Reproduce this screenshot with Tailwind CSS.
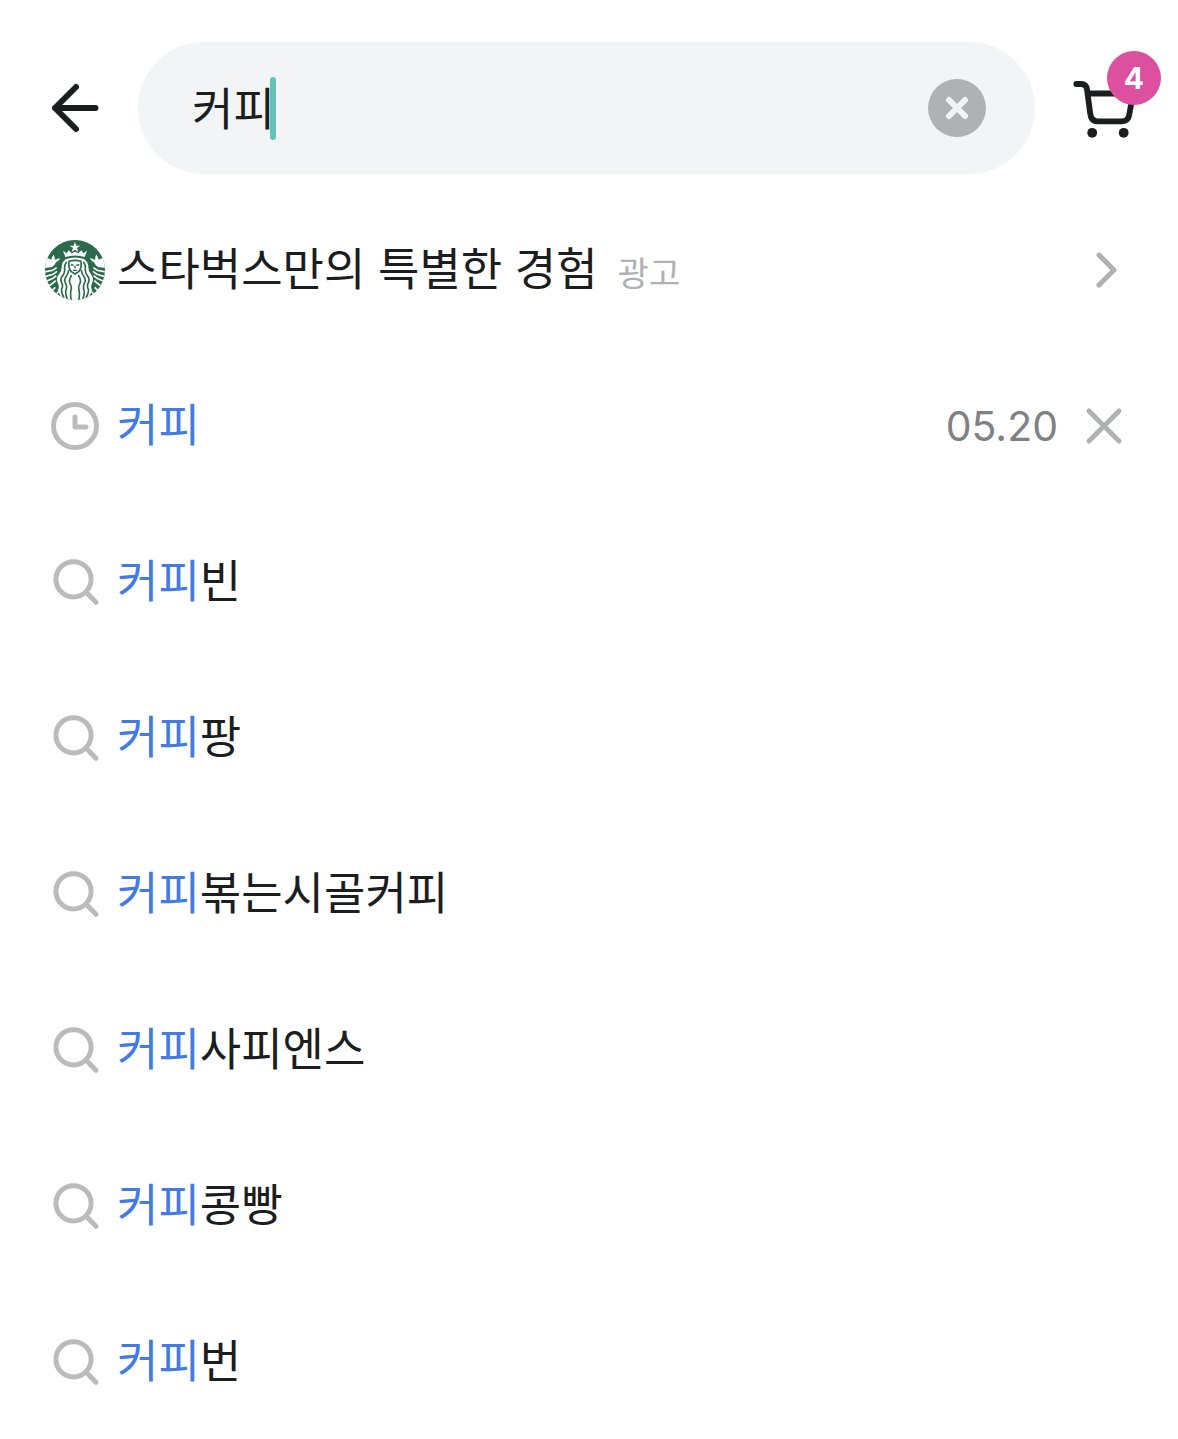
<!DOCTYPE html>
<html lang="ko">

<head>
    <meta charset="UTF-8">
    <meta name="viewport" content="width=device-width, initial-scale=1.0">
    <title>커피 - 검색</title>
    <script src="https://cdn.jsdelivr.net/npm/@tailwindcss/browser@4"></script>
</head>

<body class="bg-white text-[#1c1d1f] text-[45px] leading-[60px] font-['Noto_Sans_CJK_KR',sans-serif]">

    <!-- Shared icons -->
    <svg class="hidden" aria-hidden="true">
        <symbol id="icon-search" viewBox="0 0 60 60">
            <g fill="none" stroke="#bbbbbb" stroke-width="5" stroke-linecap="round">
                <circle cx="28.5" cy="27.3" r="17.6" />
                <path d="M41.5 40.5L51 50.3" />
            </g>
        </symbol>
    </svg>

    <header class="flex items-center gap-[33px] pt-[42px] pl-[45px] pr-[38px]">
        <button type="button" aria-label="뒤로" class="shrink-0">
            <svg class="size-[60px]" viewBox="0 0 60 60" fill="none" stroke="#1c1d1f" stroke-width="6" stroke-linecap="round" stroke-linejoin="round">
                <path d="M50.5 30H10M31 9L10 30L31 51" />
            </svg>
        </button>

        <form role="search" class="flex flex-1 items-center h-[132px] min-w-0 rounded-full bg-[#f2f4f6] pl-[54px] pr-[49px]">
            <input type="text" value="커피" aria-label="검색어" class="field-sizing-content min-w-0 pb-0.5 outline-none">
            <span class="-ml-[5px] h-[63px] w-1.5 shrink-0 rounded-full bg-[#62c3b5]"></span>
            <button type="reset" aria-label="지우기" class="ml-auto shrink-0">
                <svg class="size-[58px]" viewBox="0 0 58 58">
                    <circle cx="29" cy="29" r="29" fill="#b0b1b3" />
                    <path d="M21 21L37 37M37 21L21 37" stroke="#f2f4f6" stroke-width="6" stroke-linecap="round" />
                </svg>
            </button>
        </form>

        <a href="#" aria-label="장바구니" class="relative shrink-0">
            <svg class="size-[72px]" viewBox="0 0 72 72" fill="none" stroke="#1c1d1f" stroke-width="5.8" stroke-linecap="round" stroke-linejoin="round">
                <path d="M8.3 12H13Q18.3 12 19 17.5L22.3 42Q23.3 49.3 29.5 49.3H54Q60 49.3 61.2 43L65 21.500H20" />
                <g fill="#1c1d1f" stroke="none">
                    <circle cx="24.2" cy="60.8" r="4.9" />
                    <circle cx="55.7" cy="60.8" r="4.9" />
                </g>
            </svg>
            <span class="absolute -top-[21px] -right-[21px] flex size-[54px] items-center justify-center rounded-full bg-[#dd4f9f] font-['Inter',sans-serif] text-[30px] font-bold text-white">4</span>
        </a>
    </header>

    <main>
        <ul class="flex flex-col gap-[60px] pt-12 pb-7 pl-[45px] pr-11">
            <li>
                <a href="#" class="flex h-24 items-center">
                    <svg class="size-[60px] shrink-0" viewBox="30 30 180 180">
                        <clipPath id="logo-clip"><circle cx="120" cy="120" r="90" /></clipPath>
                        <g clip-path="url(#logo-clip)">
                            <path fill="#2b6b4c" d="M30 30h180v180H30z" />
                            <g fill="#fff">
                                <!-- star and crown -->
                                <path d="M120 36l4 11h12l-10 7 4 12-10-7-10 7 4-12-10-7h12z" />
                                <path d="M84 62l11 8 6-9 9 9 10-5 10 5 9-9 6 9 11-8-7 19q-29-9-58 0z" />
                                <!-- raised tails -->
                                <path d="M32 84q10 0 17 5 1-9 7-15 5 8 3 16 8-5 17-5-5 8-13 12-4 10-12 14l-21 3-4-8q10-9 6-22z" />
                                <path d="M208 84q-10 0-17 5-1-9-7-15-5 8-3 16-8-5-17-5 5 8 13 12 4 10 12 14l21 3 4-8q-10-9-6-22z" />
                                <!-- hair and body -->
                                <path d="M93 87q27-9 54 0 13 9 13 25 0 13 8 21 10 12 4 25-7 12 0 24l-16 28H84l-16-28q7-12 0-24-6-13 4-25 8-8 8-21 0-16 13-25z" />
                            </g>
                            <!-- tail scales -->
                            <g fill="none" stroke="#fff" stroke-width="5">
                                <path d="M29 126l24-5 12-8M30 140l24-7 12-9M34 154l20-9 10-8M40 169l14-10 8-7M49 184l12-12M60 196l10-10" />
                                <path d="M211 126l-24-5-12-8M210 140l-24-7-12-9M206 154l-20-9-10-8M200 169l-14-10-8-7M191 184l-12-12M180 196l-10-10" />
                            </g>
                            <!-- hair waves -->
                            <g fill="none" stroke="#2b6b4c" stroke-width="5" stroke-linecap="round">
                                <path d="M94 97q-6 8-5 20 1 12-6 20-9 10-3 21 5 10 0 20-2 8 6 24M101 122q-2 12-8 18-7 10-1 20 5 10 1 20-3 10 4 28M109 137q-8 12-4 23 6 10 3 20-3 12 1 32" />
                                <path d="M146 97q6 8 5 20-1 12 6 20 9 10 3 21-5 10 0 20 2 8-6 24M139 122q2 12 8 18 7 10 1 20-5 10-1 20 3 10-4 28M131 137q8 12 4 23-6 10-3 20 3 12-1 32" />
                            </g>
                            <!-- face -->
                            <path fill="none" stroke="#2b6b4c" stroke-width="5" d="M102 94q-3 20 7 31l11 7 11-7q10-11 7-31-18-6-36 0z" />
                            <g fill="none" stroke="#2b6b4c" stroke-width="4">
                                <path d="M107 105h9M124 105h9M120 107v8M114 121h12" />
                            </g>
                        </g>
                    </svg>
                    <span class="pl-3 pb-1.5">스타벅스만의 특별한 경험</span>
                    <span class="pl-5 pt-1 text-[34px] text-[#b0b1b3]">광고</span>
                    <svg class="ml-auto size-[60px] shrink-0" viewBox="0 0 60 60" fill="none" stroke="#b0b1b3" stroke-width="5" stroke-linecap="round" stroke-linejoin="round">
                        <path d="M25 15L40 30L25 45" />
                    </svg>
                </a>
            </li>
            <li class="flex h-24 items-center">
                <a href="#" class="flex flex-1 items-center">
                    <svg class="size-[60px] shrink-0" viewBox="0 0 60 60" fill="none" stroke="#bbbbbb" stroke-width="5" stroke-linecap="round" stroke-linejoin="round">
                        <circle cx="30" cy="30" r="21.5" />
                        <path d="M30 21V31H41" />
                    </svg>
                    <span class="pl-3 pb-1.5 text-[#437be3]">커피</span>
                </a>
                <time class="pr-4 font-['Inter',sans-serif] text-[41px] text-[#808183]">05.20</time>
                <button type="button" aria-label="삭제" class="shrink-0">
                    <svg class="size-[60px]" viewBox="0 0 60 60" fill="none" stroke="#b0b1b3" stroke-width="5" stroke-linecap="round">
                        <path d="M15 15L45 45M45 15L15 45" />
                    </svg>
                </button>
            </li>
            <li>
                <a href="#" class="flex h-24 items-center">
                    <svg class="size-[60px] shrink-0"><use href="#icon-search" /></svg>
                    <span class="pl-3 pb-1.5"><span class="text-[#437be3]">커피</span>빈</span>
                </a>
            </li>
            <li>
                <a href="#" class="flex h-24 items-center">
                    <svg class="size-[60px] shrink-0"><use href="#icon-search" /></svg>
                    <span class="pl-3 pb-1.5"><span class="text-[#437be3]">커피</span>팡</span>
                </a>
            </li>
            <li>
                <a href="#" class="flex h-24 items-center">
                    <svg class="size-[60px] shrink-0"><use href="#icon-search" /></svg>
                    <span class="pl-3 pb-1.5"><span class="text-[#437be3]">커피</span>볶는시골커피</span>
                </a>
            </li>
            <li>
                <a href="#" class="flex h-24 items-center">
                    <svg class="size-[60px] shrink-0"><use href="#icon-search" /></svg>
                    <span class="pl-3 pb-1.5"><span class="text-[#437be3]">커피</span>사피엔스</span>
                </a>
            </li>
            <li>
                <a href="#" class="flex h-24 items-center">
                    <svg class="size-[60px] shrink-0"><use href="#icon-search" /></svg>
                    <span class="pl-3 pb-1.5"><span class="text-[#437be3]">커피</span>콩빵</span>
                </a>
            </li>
            <li>
                <a href="#" class="flex h-24 items-center">
                    <svg class="size-[60px] shrink-0"><use href="#icon-search" /></svg>
                    <span class="pl-3 pb-1.5"><span class="text-[#437be3]">커피</span>번</span>
                </a>
            </li>
        </ul>
    </main>

</body>

</html>
